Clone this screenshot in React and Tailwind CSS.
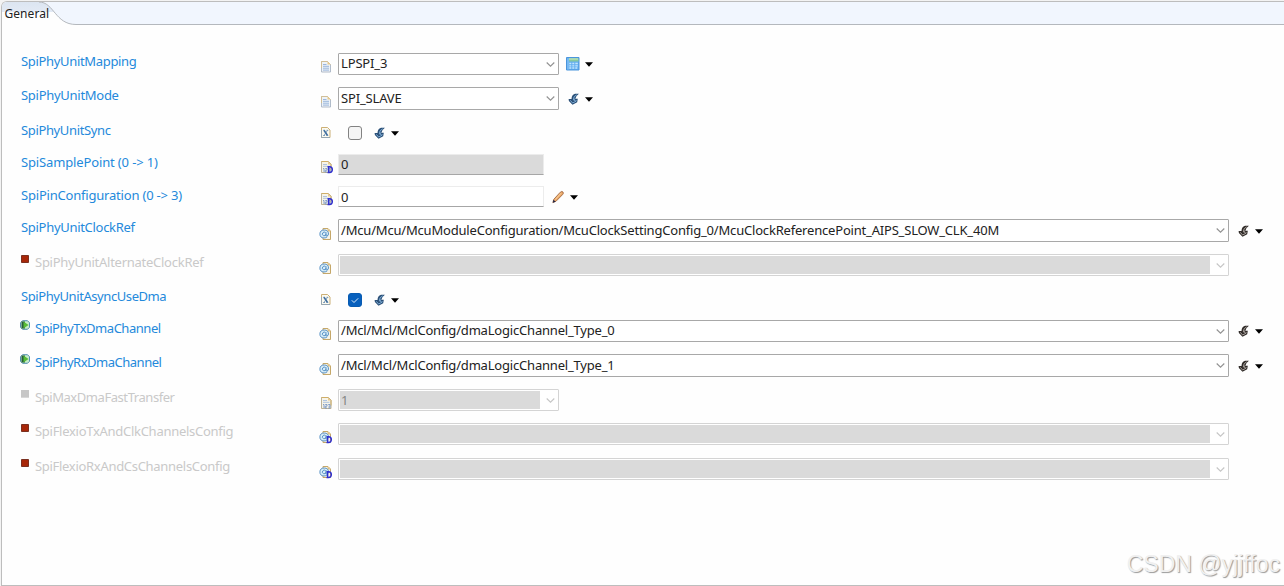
import React from 'react'
import clsx from 'clsx'

const Rows = [
    { label: 'SpiPhyUnitMapping', row: 'h-[34px]', track: 'tracking-[-0.33px]', type: 'select', icon: 'doc', value: 'LPSPI_3', action: 'calc' },
    { label: 'SpiPhyUnitMode', row: 'h-[35px]', track: 'tracking-[-0.28px]', type: 'select', tall: true, icon: 'doc', value: 'SPI_SLAVE', action: 'bolt' },
    { label: 'SpiPhyUnitSync', row: 'h-8', track: 'tracking-[-0.36px]', type: 'check', icon: 'bool', checked: false, action: 'bolt' },
    { label: 'SpiSamplePoint (0 -> 1)', row: 'h-[33px]', track: 'tracking-[-0.14px]', type: 'input', icon: 'num', deflt: true, value: '0', readOnly: true },
    { label: 'SpiPinConfiguration (0 -> 3)', row: 'h-8', track: 'tracking-[-0.2px]', type: 'input', icon: 'num', deflt: true, value: '0', action: 'pencil' },
    { label: 'SpiPhyUnitClockRef', row: 'h-[35px]', track: 'tracking-[-0.3px]', type: 'select', tall: true, wide: true, icon: 'ref', value: '/Mcu/Mcu/McuModuleConfiguration/McuClockSettingConfig_0/McuClockReferencePoint_AIPS_SLOW_CLK_40M', action: 'dark' },
    { label: 'SpiPhyUnitAlternateClockRef', row: 'h-[34px]', track: 'tracking-[-0.26px]', type: 'select', wide: true, icon: 'ref', state: 'off', disabled: true },
    { label: 'SpiPhyUnitAsyncUseDma', row: 'h-8', track: 'tracking-[-0.42px]', type: 'check', icon: 'bool', checked: true, action: 'bolt' },
    { label: 'SpiPhyTxDmaChannel', row: 'h-[34px]', track: 'tracking-[-0.47px]', type: 'select', wide: true, icon: 'ref', state: 'on', value: '/Mcl/Mcl/MclConfig/dmaLogicChannel_Type_0', action: 'dark' },
    { label: 'SpiPhyRxDmaChannel', row: 'h-[35px]', track: 'tracking-[-0.49px]', type: 'select', tall: true, wide: true, icon: 'ref', state: 'on', value: '/Mcl/Mcl/MclConfig/dmaLogicChannel_Type_1', action: 'dark' },
    { label: 'SpiMaxDmaFastTransfer', row: 'h-[34px]', track: 'tracking-[-0.44px]', type: 'select', icon: 'num', state: 'none', value: '1', disabled: true },
    { label: 'SpiFlexioTxAndClkChannelsConfig', row: 'h-[35px]', track: 'tracking-[-0.28px]', type: 'select', wide: true, icon: 'ref', deflt: true, state: 'off', disabled: true },
    { label: 'SpiFlexioRxAndCsChannelsConfig', row: 'h-[35px]', track: 'tracking-[-0.3px]', type: 'select', wide: true, icon: 'ref', deflt: true, state: 'off', disabled: true },
]

const TypeIcon = ({ name, deflt }) => (
    <svg width="14" height="14" viewBox="0 0 14 14" className="shrink-0">
        {name === 'doc' && <>
            <path d="M2.500 1.500h6l3 3v7.500h-9z" fill="#eef3f8" stroke="#a9b4c4" strokeWidth=".9" />
            <path d="M2.500 8V1.500h6l3 3" fill="none" stroke="#d6bf90" strokeWidth=".9" />
            <path d="M8.500 1.500v3h3z" fill="#e8c98c" />
            <path d="M4 4.500h3.500M4 6.300h6M4 8.200h6M4 10.100h6" stroke="#90afd8" strokeWidth=".9" />
        </>}
        {name === 'bool' && <>
            <path d="M1.500 1.500h6l2.500 2.500v7.500h-8.500z" fill="#fcfaf0" stroke="#c6a766" strokeWidth=".9" />
            <path d="M1.500 4v7.500h8.500" fill="none" stroke="#8fa5b8" strokeWidth=".9" />
            <path d="M4 4.300 7.500 9.500" stroke="#3e6d9e" strokeWidth="1.600" />
            <path d="M7.500 4.300 4 9.500M3.200 4.300h1.800M6.500 4.300h1.800M3.200 9.500h1.800M6.500 9.500h1.800" stroke="#4d7aa8" strokeWidth=".7" />
        </>}
        {name === 'num' && <>
            <path d="M1.500 1.500h7l2.500 2.500v8.500h-9.500z" fill="#f7f4e8" stroke="#b5aa8c" strokeWidth=".9" />
            <path d="M1.500 1.500h6.500l3 3v5" fill="none" stroke="#d0ae67" />
            <path d="M8 1.500v3h3z" fill="#e8c98c" />
            <path d="M3 4.500h4M3 6.300h6.500" stroke="#a5bddd" strokeWidth=".9" />
            <path d="M3 8.500h1v3.500M5.200 8.500h1.800v1.700h-1.800v1.800h1.800M8.200 8.500h1.800v3.500h-1.800M8.500 10.200h1.300" fill="none" stroke="#6b8dc2" strokeWidth=".8" />
        </>}
        {name === 'ref' && <>
            <path d="M4 1.500h5l2.500 2.500v8.500H4z" fill="#f7f4e8" stroke="#c5a769" />
            <path d="M8.500 1.500v3h3z" fill="#e0bd7c" />
            <ellipse cx="5.200" cy="7" rx="4.500" ry="4" fill="#d9eef9" />
            <path d="M8.300 9.800Q6.800 11 5 11A4.300 4 0 1 1 9.500 7Q9.300 9 7.800 8.900T7 7.500V5.200M7 7A1.800 1.800 0 1 1 6.600 5.800" fill="none" stroke="#4c88c0" strokeWidth=".9" />
        </>}
        {deflt && <path d="M7.500 6.700h2q2.800 0 2.800 2.900t-2.800 2.900h-2M8.600 6.700v5.800" fill="none" stroke="#2f2fcf" strokeWidth="1.500" />}
    </svg>
)

const Bolt = ({ dark }) => (
    <svg width="12" height="14" viewBox="0 0 12 14" className="shrink-0">
        <path d="M10.900 1.700H7Q3.700 2.700 3.500 7H.600L.900 9 4.500 12.800 9.200 10.200 9.800 6.800H7.300Q7.300 4.300 10.900 1.700z" fill={dark ? '#302b28' : '#2b5078'} />
        <path d="M8.700 2.800Q5.200 4 5.300 8.200M2.300 8.300 4.600 11 8 9.200V8M6.300 6.500V9" fill="none" stroke={dark ? '#a39d98' : '#7eabd3'} strokeWidth="1" />
    </svg>
)

const Action = ({ name }) => (
    <div className="flex h-[22px] items-center">
        {name === 'calc' &&
            <svg width="14" height="14" viewBox="0 0 14 14" className="-ml-0.5 shrink-0">
                <path d="M.500.500h12.500v12.500H.500z" fill="#64aef0" stroke="#4a95dc" />
                <path d="M3 1.200h9.500v3.300H3z" fill="#86c8a0" />
                <path d="M3 2h9" stroke="#d2eeb8" />
                <path d="M3.300 6.500h2M6.300 6.500h2M9.300 6.500h2.500M3.300 8.800h2M6.300 8.800h2M9.300 8.800h2.500M3.300 11h2M6.300 11h2M9.300 11h2" stroke="#c2e6fd" strokeWidth="1.300" />
                <path d="M2 1.500v11" stroke="#8bc5f5" />
            </svg>}
        {(name === 'bolt' || name === 'dark') && <Bolt dark={name === 'dark'} />}
        {name === 'pencil' &&
            <svg width="12" height="14" viewBox="0 0 12 14" className="-ml-px mr-px shrink-0">
                <path d="M.800 12.500 1.800 9.300 8.300 2.200Q10 .700 11 2T10.500 4.700L4 11.300z" fill="#e8a668" stroke="#9b6039" strokeWidth=".8" />
                <path d="M3.300 9.500 9 3.300" stroke="#ffd8a2" />
                <path d="M.800 12.700 1.500 9.800 3.600 11.800z" fill="#1d2448" />
            </svg>}
        <svg width="8" height="5" viewBox="0 0 8 5" className="ml-[5px] shrink-0">
            <path d="M0 .300h8L4 4.700z" fill="#000" />
        </svg>
    </div>
)

const Select = ({ item }) => (
    <div className={clsx('flex shrink-0 rounded-[1px] border bg-white', item.tall ? 'h-[23px]' : 'h-[22px]', item.wide ? 'w-[891px]' : 'w-[221px]', item.disabled ? 'border-[#d4d4d4]' : 'border-[#a8a8a8]')}>
        <div className={clsx('flex-1 whitespace-pre text-[13px]', item.disabled ? 'my-px ml-px bg-[#dadada] pl-px leading-[18px] text-[#858585]' : 'pl-[2px] text-[#222]', !item.disabled && (item.tall ? 'leading-[20px]' : 'leading-[19px]'), item.wide ? 'tracking-[-0.19px]' : 'tracking-[-0.15px]')}>
            {item.value}
        </div>
        <div className="flex w-[18px] items-center justify-end pr-[3px]">
            <svg width="9" height="5" viewBox="0 0 9 5">
                <path d="M.700.500 4.500 4.200 8.300.500" fill="none" stroke={item.disabled ? '#c6c6c6' : '#929292'} strokeWidth="1.100" />
            </svg>
        </div>
    </div>
)

const Input = ({ item }) => (
    <div className={clsx('h-[21px] w-[206px] shrink-0 border border-[#ececec] border-b-[#a6a6a6] pl-[2px] text-[13px] text-[#222]', item.readOnly ? 'bg-[#dadada] leading-[18px]' : 'bg-white leading-5')}>
        {item.value}
    </div>
)

const Check = ({ checked }) => (
    <div className={clsx('ml-[10px] flex size-[14px] shrink-0 items-center justify-center rounded-[3px] border', checked ? 'border-[#075bb2] bg-[#0760bd]' : 'border-[#828282] bg-[#f5f5f5]')}>
        {checked &&
            <svg width="8" height="7" viewBox="0 0 8 7">
                <path d="M.800 3.300 3 5.500 7.200 1.300" fill="none" stroke="#dceafa" />
            </svg>}
    </div>
)

const State = ({ state }) => (
    <svg width="10" height="10" viewBox="0 0 10 10" className="mt-[2px] mr-[5px] shrink-0">
        {state === 'on' && <>
            <path d="M2.500.700h5l2 2v4.600l-2 2h-5l-2-2V2.700z" fill="#c6ecc9" stroke="#4583ac" strokeWidth=".9" />
            <path d="M1.500 1.500h3.500v7H1.500z" fill="#285e3c" />
            <path d="M3.500 1.500 8.500 5 3.500 8.500z" fill="#57bc36" />
        </>}
        {state === 'off' && <path d="M1.500 1.500h7v7h-7z" fill="#a82709" stroke="#7a3020" />}
        {state === 'none' && <path d="M1 1h8v7.700H1z" fill="#c7c7c7" />}
    </svg>
)

const Row = ({ item }) => {
    const isCheck = item.type === 'check'
    const isPin = item.action === 'pencil'
    return (
        <div className={clsx('flex items-start', item.row)}>
            <div className="flex w-[299px] shrink-0">
                {item.state && <State state={item.state} />}
                <div className={clsx('whitespace-nowrap text-[13px] leading-5', item.track, item.disabled ? 'text-[#c9c9c9]' : 'text-[#2489db]', !item.state && 'pl-px')}>
                    {item.label}
                </div>
            </div>
            <div className={clsx('w-[19px] shrink-0', isCheck ? 'pl-px' : item.icon === 'num' ? 'pl-px' : '', isCheck ? (item.checked ? 'pt-[7px]' : 'pt-[6px]') : isPin ? 'pt-[7px]' : item.deflt && item.icon === 'num' ? 'pt-2' : item.tall ? 'pt-[10px]' : 'pt-[9px]')}>
                <TypeIcon name={item.icon} deflt={item.deflt} />
            </div>
            {isCheck && <div className={item.checked ? 'pt-[7px]' : 'pt-[6px]'}><Check checked={item.checked} /></div>}
            {item.type === 'select' && <div className="pt-[2px]"><Select item={item} /></div>}
            {item.type === 'input' && <div className={isPin ? 'pt-px' : 'pt-[2px]'}><Input item={item} /></div>}
            {item.action &&
                <div className={clsx(isCheck ? 'pl-3' : 'pl-[9px]', item.checked || item.tall ? 'pt-[3px]' : isPin ? 'pt-px' : 'pt-[2px]')}>
                    <Action name={item.action} />
                </div>}
        </div>
    )
}

export default function App() {
    return (
        <div className="relative h-[586px] w-[1284px] overflow-hidden bg-[#f3f3f3] pt-px pl-px font-['Noto_Sans','Open_Sans',sans-serif]">
            <div className="flex h-[585px] flex-col overflow-hidden rounded-tl-md border-t border-b border-l border-[#bdbdbd] bg-[#fefefe]">
                <div className="relative h-[23px] shrink-0">
                    <svg width="1283" height="23" viewBox="0 0 1283 23" className="absolute top-0 left-0">
                        <defs>
                            <linearGradient id="tab" x1="0" y1="0" x2="0" y2="1">
                                <stop offset="0" stopColor="#dce5f1" />
                                <stop offset=".45" stopColor="#e3eaf5" />
                                <stop offset=".45" stopColor="#fefefe" />
                            </linearGradient>
                        </defs>
                        <path d="M0 0H1283V23H0z" fill="#f1f6fe" />
                        <path d="M0 0H37C52 0 53 22.500 74 22.500V23H0z" fill="url(#tab)" />
                        <path d="M37 0C52 0 53 22.500 74 22.500H1283" fill="none" stroke="#b4b8bd" />
                    </svg>
                    <div className="relative pl-[2.500px] text-[12px] leading-[23px] tracking-[0.05px] text-[#222]">General</div>
                </div>
                <div className="flex flex-col pt-[26px] pl-[18px]">
                    {Rows.map((item, index) => (
                        <Row key={index} item={item} />
                    ))}
                </div>
            </div>
            <div className="absolute right-[4px] bottom-[8px] font-['Liberation_Sans',sans-serif] text-[23px] leading-7 text-[#f0f0f0] [text-shadow:1px_1px_1px_#999]">CSDN @yjjffoc</div>
        </div>
    )
}
